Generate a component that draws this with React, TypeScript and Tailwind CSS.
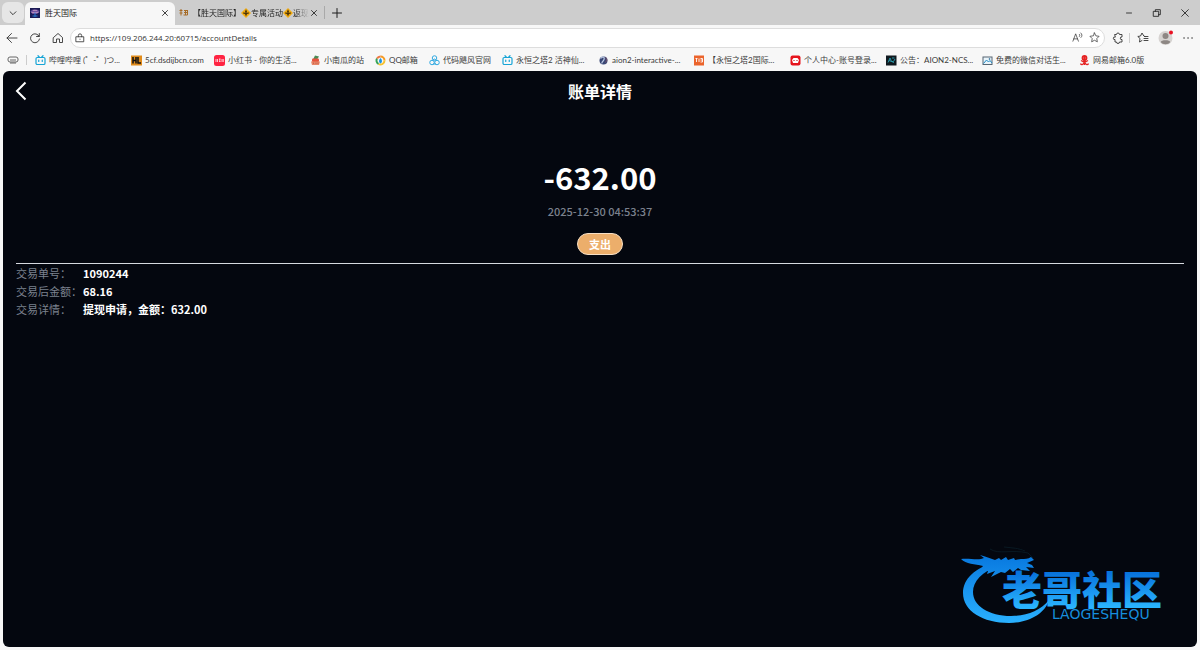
import type { ReactNode } from "react";

const uiFont = "font-['Lato','Noto_Sans_CJK_SC',sans-serif]";
const pageFont = "font-['Noto_Sans_CJK_SC',sans-serif]";

function Line({ d, className = "size-3", width = 1 }: { d: string; className?: string; width?: number }) {
  return (
    <svg viewBox="0 0 12 12" className={className} fill="none" stroke="currentColor" strokeWidth={width} strokeLinecap="round" strokeLinejoin="round" aria-hidden="true">
      <path d={d} />
    </svg>
  );
}

function Fleur() {
  return (
    <svg viewBox="0 0 10 10" className="size-2.5 shrink-0" aria-hidden="true">
      <path d="M5 0 10 5 5 10 0 5Z" fill="#f2ac12" />
      <path d="M5 1.200 6 3.500 5.500 5 7.500 4.200 8 5.600 6 6 5 8.600 4 6 2 5.600 2.500 4.200 4.500 5 4 3.500Z" fill="#4a3309" />
    </svg>
  );
}

function Favicon({ children }: { children: ReactNode }) {
  return (
    <svg viewBox="0 0 22 22" className="size-[11px] shrink-0" aria-hidden="true">
      {children}
    </svg>
  );
}

const tvIcon = (
  <g fill="none" stroke="#16a4d6" strokeWidth="2.4" strokeLinecap="round">
    <rect x="2" y="5" width="18" height="14" rx="2.5" />
    <path d="M6 1.5 8.5 4M16 1.5 13.5 4M7.5 10v3M14.5 10v3" />
  </g>
);

const bookmarks: { label: string; width: string; icon: ReactNode }[] = [
  { label: "哔哩哔哩 (゜-゜)つ...", width: "w-24", icon: tvIcon },
  {
    label: "5cf.dsdijbcn.com",
    width: "w-[83px]",
    icon: (
      <>
        <rect y="1" width="22" height="20" fill="#e08b1b" />
        <path d="M4 4v13M4 11h6M10 4v13M14 4v12h6" stroke="#111" strokeWidth="3" fill="none" />
      </>
    ),
  },
  {
    label: "小红书 - 你的生活...",
    width: "w-24",
    icon: (
      <>
        <rect width="22" height="22" rx="5" fill="#ff2442" />
        <path d="M4 8v6M7 8v6M10 8h3M10 13h3M11.500 8v5M16 8v6M18.500 8v6" stroke="#fff" strokeWidth="1.500" fill="none" />
      </>
    ),
  },
  {
    label: "小南瓜的站",
    width: "w-[65px]",
    icon: (
      <>
        <path d="M10 1l8 2-4 6H6Z" fill="#4b8b55" />
        <rect x="4" y="7" width="14" height="7" rx="2" fill="#e5533d" />
        <path d="M2 13h18l-2 7H4Z" fill="#e88768" />
        <path d="M7 15v3M12 15v3M16 15v3" stroke="#a9473b" />
      </>
    ),
  },
  {
    label: "QQ邮箱",
    width: "w-[54px]",
    icon: (
      <g fill="none" strokeWidth="4">
        <path d="M11 3a8 8 0 0 1 8 8" stroke="#f59b22" />
        <path d="M19 11a8 8 0 0 1-12 7" stroke="#f6c22f" />
        <path d="M7 18A8 8 0 0 1 4 7" stroke="#37a456" />
        <path d="M4 7a8 8 0 0 1 7-4" stroke="#ee7842" />
        <path d="M11 6c4 4 4 9 0 11-4-2-4-7 0-11Z" fill="#1792e5" stroke="none" />
      </g>
    ),
  },
  {
    label: "代码飓风官网",
    width: "w-[73px]",
    icon: (
      <g fill="none" stroke="#31a9e1" strokeWidth="2">
        <circle cx="11" cy="6" r="4.500" />
        <circle cx="6" cy="15" r="4.500" />
        <circle cx="16" cy="15" r="4.500" />
        <path d="M7 11l4-3 4 3M8 18h6" />
      </g>
    ),
  },
  { label: "永恒之塔2 活神仙...", width: "w-24", icon: tvIcon },
  {
    label: "aion2-interactive-...",
    width: "w-24",
    icon: (
      <>
        <circle cx="11" cy="11" r="8" fill="#394775" />
        <path d="M5 7c4-5 9-3 7 2s-5 4-4 8" stroke="#b9c6e1" strokeWidth="2.500" fill="none" />
        <path d="M15 5l3 5-3 5" stroke="#76516b" strokeWidth="2" fill="none" />
      </>
    ),
  },
  {
    label: "【永恒之塔2国际...",
    width: "w-24",
    icon: (
      <>
        <rect y="1" width="20" height="20" fill="#eb642c" />
        <path d="M3 7h4M5 7v7M10 7v7M13 7h4v7h-4M13 10h4" stroke="#fff" strokeWidth="1.800" fill="none" />
      </>
    ),
  },
  {
    label: "个人中心-账号登录...",
    width: "w-24",
    icon: (
      <>
        <rect x="1" y="1" width="20" height="20" rx="4" fill="#e6151d" />
        <path d="M7 6h8l3 4-2 6H6l-2-6Z" fill="#fff" />
        <path d="M7 11h2M13 11h2" stroke="#b00" strokeWidth="2" />
      </>
    ),
  },
  {
    label: "公告：AION2-NCS...",
    width: "w-24",
    icon: (
      <>
        <rect y="1" width="21" height="20" fill="#10191f" />
        <path d="M4 15 8 6l3 7h4l3-5M12 6h5M6 11l10 4" stroke="#2996a6" strokeWidth="2" fill="none" />
      </>
    ),
  },
  {
    label: "免费的微信对话生...",
    width: "w-[97px]",
    icon: (
      <g fill="none" strokeWidth="2">
        <rect x="2" y="4" width="18" height="15" stroke="#576572" fill="#e9f4fa" />
        <path d="M3 17 9 10l4 4 3-3 4 5" stroke="#238cc6" />
        <circle cx="15" cy="8" r="1" stroke="#35739c" />
      </g>
    ),
  },
  {
    label: "网易邮箱6.0版",
    width: "w-20",
    icon: (
      <g fill="none" stroke="#e52222" strokeWidth="2.600">
        <circle cx="11" cy="6" r="4.500" fill="#e52222" />
        <path d="M4 11c4 3 10 3 14 0M9 11v5c0 4-5 4-6 1M13 11v5c0 4 5 4 6 1M11 12v8" />
        <path d="M9 6h1M13 6h1" stroke="#fff" strokeWidth="1.500" />
      </g>
    ),
  },
];

const details = [
  { label: "交易单号：", value: "1090244" },
  { label: "交易后金额：", value: "68.16" },
  { label: "交易详情：", value: "提现申请，金额：632.00" },
];

function TabStrip() {
  return (
    <div className="flex h-[25px] items-stretch bg-[#cdcdcd] text-[8px] text-[#1d1d1d]">
      <button aria-label="标签页操作" className="my-0.5 ml-0.5 mr-px flex w-[22px] items-center justify-center rounded-md bg-[#e6e6e6]">
        <Line d="M2.500 4.500 6 8l3.500-3.500" className="size-2.5" />
      </button>
      <div className="mt-0.5 flex w-[150px] items-center rounded-t-md bg-[#f7f7f7] pb-0.5 pl-[5px] pr-[5px]">
        <svg viewBox="0 0 20 20" className="size-2.5 shrink-0" aria-hidden="true">
          <rect width="20" height="20" fill="#1c1c55" />
          <path d="M1 7c5-7 14-5 18 0l-5 5H5Z" fill="#7353a0" />
          <path d="M3 9h14M6 5h8" stroke="#c99bc4" strokeWidth="1.500" />
          <path d="M10 9v9M5 16h10" stroke="#2c79ce" strokeWidth="2" />
        </svg>
        <span className="ml-[5px] flex-1">胜天国际</span>
        <button aria-label="关闭标签页"><Line d="M3 3l6 6M9 3 3 9" className="size-2.5" /></button>
      </div>
      <div className="flex w-[149px] items-center pl-1 pr-[5px]">
        <svg viewBox="0 0 20 14" className="h-[7px] w-2.5 shrink-0" aria-hidden="true">
          <path d="M1 3h6M4 0v13M1 8h6M10 3h8M10 7h8M13 2v10M17 4v8H9" stroke="#a66b26" strokeWidth="2" fill="none" />
        </svg>
        <span className="ml-1 flex min-w-0 flex-1 items-center overflow-hidden whitespace-nowrap [mask-image:linear-gradient(to_right,black_88%,transparent)]">
          【胜天国际】<Fleur />专属活动<Fleur />返现
        </span>
        <button aria-label="关闭标签页"><Line d="M3 3l6 6M9 3 3 9" className="size-2.5" /></button>
      </div>
      <span className="my-1.5 w-px bg-[#a9a9a9]" />
      <button aria-label="新建标签页" className="ml-1.5"><Line d="M6 1.500v9M1.500 6h9" /></button>
      <div className="ml-auto flex items-center gap-[18px] pr-2.5">
        <button aria-label="最小化"><Line d="M3 6h6" className="size-2.5" /></button>
        <button aria-label="还原"><Line d="M2 4h6v6H2ZM4 4V2h6v6H8" className="size-2.5" /></button>
        <button aria-label="关闭"><Line d="M2 2l8 8M10 2l-8 8" className="size-2.5" /></button>
      </div>
    </div>
  );
}

function AddressBar() {
  return (
    <div className="flex h-[25px] items-center pl-1.5 text-[#343434]">
      <div className="flex items-center gap-[11px]">
        <button aria-label="后退"><Line d="M11 6H1M5.500 1.500 1 6l4.500 4.500" width={0.9} /></button>
        <button aria-label="刷新"><Line d="M10.200 4.500A4.500 4.500 0 1 0 10.500 7M10.300 1.500v3H7.500" width={0.9} /></button>
        <button aria-label="主页"><Line d="M1.500 5.500 6 1.500l4.500 4v5H7.500V7h-3v3.500h-3Z" width={0.9} /></button>
      </div>
      <div className="ml-1.5 flex h-5 flex-1 items-center rounded-full border border-[#dddddd] bg-white pl-1 pr-1">
        <Line d="M1.500 4.500h9v6h-9ZM4 4.500V3a2 2 0 0 1 4 0v1.500M6 7.300v.4" className="size-2.5" />
        <input aria-label="地址" readOnly value="https://109.206.244.20:60715/accountDetails" className="ml-[5px] min-w-0 flex-1 bg-transparent font-['Open_Sans',sans-serif] text-[8px] text-[#333] outline-none" />
        <button aria-label="朗读"><Line d="M1 10 4 2l3 8M2 7.500h4M8 2.500c.7.700.7 1.800 0 2.500M9.500 1c1.800 1.500 1.800 3.500.3 5" width={0.8} className="size-[11px]" /></button>
        <button aria-label="收藏" className="ml-1.5"><Line d="M6 1l1.500 3.200 3.500.5-2.500 2.500.6 3.500L6 9l-3.100 1.700.6-3.500L1 4.700l3.500-.5Z" width={0.8} className="size-[11px]" /></button>
      </div>
      <div className="flex items-center pl-[7px] pr-1.5">
        <button aria-label="扩展"><Line d="M3 2.500h1.500a1.500 1.500 0 0 1 3 0H10V5a1.300 1.300 0 1 0 0 2.500V10H7.500a1.500 1.500 0 0 1-3 0H3V7.500a1.300 1.300 0 1 1 0-2.500Z" className="size-3" width={0.9} /></button>
        <span className="ml-[5px] h-2.5 w-px bg-[#cdcdcd]" />
        <button aria-label="收藏夹" className="ml-[7px]"><Line d="M8 4.500 6.800 4 5 1 3.500 4 .8 4.500 3 6.500 2.500 10 5 8.500M7.500 4.500H11M7 6.500h4M7 8.500h4" width={0.9} /></button>
        <button aria-label="个人资料" className="ml-[9px]">
          <svg viewBox="0 0 16 16" className="size-4" aria-hidden="true">
            <circle cx="7.500" cy="8" r="7" fill="#d6d3d1" />
            <circle cx="7.500" cy="6" r="3" fill="#8d8784" />
            <path d="M2.800 12c0-2.500 9.400-2.500 9.400 0-1.500 3-7.900 3-9.400 0Z" fill="#8d8784" />
            <circle cx="13" cy="2.500" r="2" fill="#e81123" />
          </svg>
        </button>
        <button aria-label="更多" className="ml-2"><Line d="M2 6h.1M6 6h.1M10 6h.1" width={1.4} /></button>
      </div>
    </div>
  );
}

function BookmarksBar() {
  return (
    <nav className="flex h-5 items-center overflow-hidden whitespace-nowrap pl-[7px] text-[8px] text-[#3b3b3b]">
      <svg viewBox="0 0 12 8" className="h-2 w-3" fill="none" stroke="#666" aria-hidden="true">
        <rect x="1" y="1" width="10" height="5" rx="2" />
        <path d="M3 4h6M3 7h6" />
      </svg>
      <span className="ml-[7px] mr-2 h-2.5 w-px bg-[#cccccc]" />
      {bookmarks.map((b) => (
        <a key={b.label} href="#" className={`flex shrink-0 items-center gap-[3px] ${b.width}`}>
          <Favicon>{b.icon}</Favicon>
          <span>{b.label}</span>
        </a>
      ))}
    </nav>
  );
}

function CommunityLogo() {
  return (
    <svg viewBox="0 0 228 84" className="absolute bottom-[18px] right-2 w-[228px]" role="img" aria-label="老哥社区 LAOGESHEQU">
      <defs>
        <linearGradient id="ring" x1="0" y1="10" x2="0" y2="80" gradientUnits="userSpaceOnUse">
          <stop offset="0" stopColor="#0878df" />
          <stop offset="1" stopColor="#2bb2ff" />
        </linearGradient>
        <linearGradient id="word" x1="0" y1="28" x2="0" y2="62" gradientUnits="userSpaceOnUse">
          <stop offset="0" stopColor="#0873dc" />
          <stop offset="1" stopColor="#2ab4ff" />
        </linearGradient>
      </defs>
      <g fill="url(#ring)">
        <path d="M34 17C14 23 2 34 2 48c0 18 20 30 46 30 19 0 36-9 40-23-9 11-23 16-38 16-22 0-38-10-38-24 0-11 9-20 26-27Z" />
        <path d="M0 14c7-1 14 1 20 0l3-1-4-3c6 2 10 3 15 5l4-2 2 2 5-3 2 3 6-2 1 2 6-1c4 0 7 0 10-2l3 3-7 3 5 2 2 3-8-1 4 4-9-1-3-2-5 4-3-3-5 4-4-1-10 5 4-6-8 3 1-3-8-1 3-4C14 19 5 19 0 14Z" />
      </g>
      <path d="M29 4c9 6 21 0 38 4l5 5M43 2c9 1 14 1 21 4" fill="none" stroke="#0e2a35" strokeWidth="1" opacity=".5" />
      <text x="41" y="60" fontSize="40" fontWeight="900" fill="url(#word)" className={pageFont}>老哥社区</text>
      <text x="91" y="74" fontSize="14" fill="#168ddd" className="font-['DejaVu_Sans',sans-serif]">LAOGESHEQU</text>
    </svg>
  );
}

function AccountDetails() {
  return (
    <main className={`relative mx-[3px] mb-[3px] mt-px flex-1 overflow-hidden rounded-md bg-[#04070f] px-[13px] text-[11px] text-white ${pageFont}`}>
      <header className="grid h-10 grid-cols-[24px_1fr_24px] items-center">
        <button aria-label="返回" className="-ml-px">
          <svg viewBox="0 0 12 20" className="h-5 w-3" fill="none" stroke="white" strokeWidth="2" aria-hidden="true">
            <path d="M10.500 1.500 2 10l8.500 8.500" />
          </svg>
        </button>
        <h1 className="text-center text-base font-bold">账单详情</h1>
      </header>
      <section className="flex flex-col items-center border-b border-[#d6d9df] pb-2 pt-[46px]">
        <p className="text-[31px] font-bold leading-10">-632.00</p>
        <time className="mt-1 font-medium leading-5 text-[#7b818d]">2025-12-30 04:53:37</time>
        <span className="mt-3 flex h-[22px] items-center rounded-full border border-[#f7dfc4] bg-[#ecae6b] px-[11px] font-bold">支出</span>
      </section>
      <dl>
        {details.map((d) => (
          <div key={d.label} className="flex h-[18px] items-center">
            <dt className="w-[67px] whitespace-nowrap text-[#7b818d]">{d.label}</dt>
            <dd className="font-bold">{d.value}</dd>
          </div>
        ))}
      </dl>
      <CommunityLogo />
    </main>
  );
}

export default function App() {
  return (
    <div className={`flex min-h-screen flex-col bg-[#f7f7f7] ${uiFont}`}>
      <TabStrip />
      <AddressBar />
      <BookmarksBar />
      <AccountDetails />
    </div>
  );
}
